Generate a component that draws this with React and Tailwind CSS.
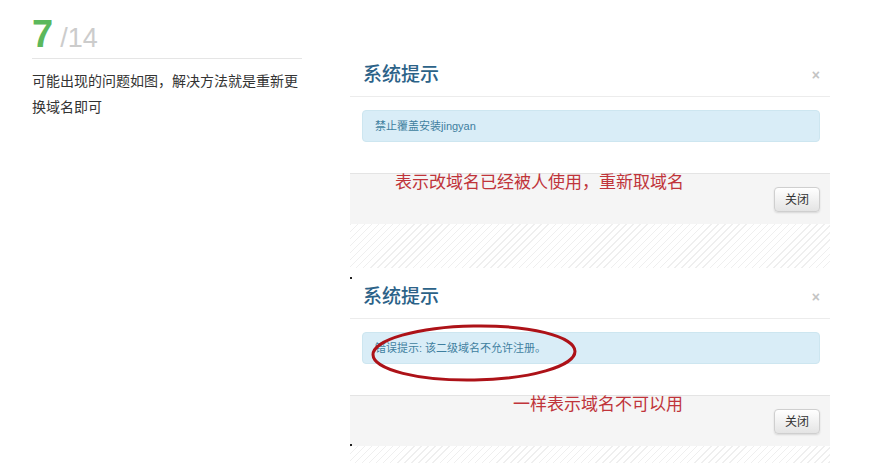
const cjk = "font-['Liberation_Sans','Noto_Sans_CJK_SC',sans-serif]";

const Modal = ({ alert, note, noteOffset, hatch, ellipse }) => (
  <div className="relative w-[480px] bg-white">
    <div className="flex h-[44px] items-center justify-between border-b border-[#ececec] pl-[13px] pr-[10px]">
      <span className="text-[19px] font-medium leading-[26px] text-[#2c6288]">系统提示</span>
      <span className="text-[14px] font-bold leading-none text-[#c4c4c4]">×</span>
    </div>
    <div className="h-[76px] px-[10px] pt-[13px] pl-[12px]">
      <div className="flex h-[32px] items-center rounded-[4px] border border-[#cde6f0] bg-[#d9edf7] px-[12px] text-[11px] text-[#3f7f9f]">
        {alert}
      </div>
    </div>
    <div className="flex h-[51px] items-start justify-between border-t border-[#e4e4e4] bg-[#f5f5f5]">
      <span
        className={`${noteOffset} -mt-[2px] text-[17px] leading-[22px] text-[#c0343a]`}
      >
        {note}
      </span>
      <button className="mr-[10px] mt-[13px] h-[25px] w-[46px] rounded-[4px] border border-[#cfcfcf] bg-gradient-to-b from-white to-[#e4e4e4] text-[12px] text-[#333] shadow-[0_1px_2px_rgba(0,0,0,0.12)]">
        关闭
      </button>
    </div>
    <div
      className={`${hatch} bg-[repeating-linear-gradient(135deg,#efefef_0px,#efefef_1px,#ffffff_1px,#ffffff_5px)]`}
    />
    {ellipse && (
      <svg
        className="absolute left-[20px] top-[48px]"
        width="210"
        height="62"
        viewBox="0 0 210 62"
      >
        <ellipse
          cx="104"
          cy="30"
          rx="101"
          ry="27"
          fill="none"
          stroke="#ad1218"
          strokeWidth="3"
          transform="rotate(-1 104 30)"
        />
      </svg>
    )}
  </div>
);

const App = () => {
  return (
    <div className={`flex min-h-[463px] overflow-hidden bg-white pl-[32px] ${cjk}`}>
      <div className="w-[270px] pt-[15px]">
        <div className="flex items-baseline border-b border-[#e5e5e5] pb-[5px]">
          <span className="text-[38px] font-bold leading-none text-[#5cb85c]">7</span>
          <span className="ml-[7px] text-[27px] leading-none text-[#cccccc]">/14</span>
        </div>
        <p className="mt-[9px] text-[14px] leading-[26px] text-[#333]">
          可能出现的问题如图，解决方法就是重新更换域名即可
        </p>
      </div>

      <div className="relative ml-[48px] flex w-[480px] flex-col gap-[7px] pt-[53px]">
        <Modal
          alert="禁止覆盖安装jingyan"
          note="表示改域名已经被人使用，重新取域名"
          noteOffset="ml-[45px]"
          hatch="h-[44px]"
        />
        <Modal
          alert="错误提示: 该二级域名不允许注册。"
          note="一样表示域名不可以用"
          noteOffset="ml-[163px]"
          hatch="h-[30px]"
          ellipse
        />
        <span className="absolute left-0 top-[277px] h-[2px] w-[2px] bg-[#222]" />
        <span className="absolute left-0 top-[444px] h-[2px] w-[2px] bg-[#222]" />
      </div>
    </div>
  );
};

export default App;
